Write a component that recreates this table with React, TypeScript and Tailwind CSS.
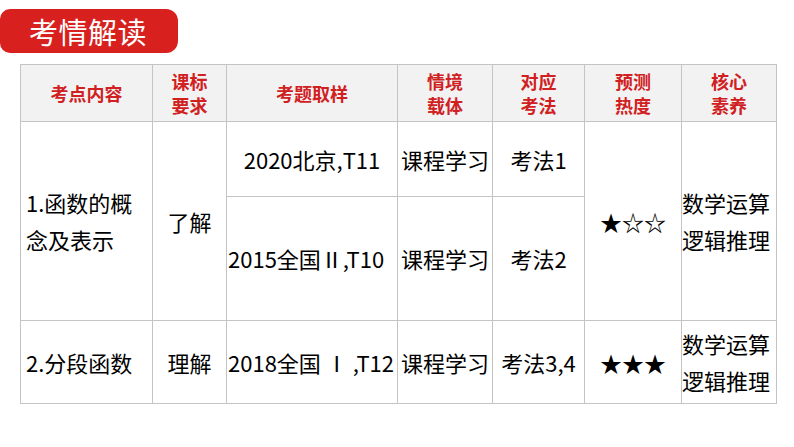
export default function App() {
  const body = "text-[22px] text-black text-center align-middle border border-[#c4c4c4] whitespace-nowrap leading-[37px]";
  const head = "text-[18px] font-bold text-[#d0201f] text-center align-middle border border-[#c4c4c4] bg-[#f2f2f2] leading-[24px]";
  return (
    <div
      className="w-[794px] h-[447px] bg-white relative overflow-hidden"
      style={{ fontFamily: '"Noto Sans CJK SC", "Noto Sans", sans-serif' }}
    >
      <div className="pt-[9px]">
        <div className="w-[178px] h-[44px] bg-[#d8211f] rounded-r-[12px] rounded-l-[10px] flex items-center pl-[29px] text-white text-[29px] leading-none tracking-[0.5px]">
          考情解读
        </div>
      </div>
      <div className="pl-[20px] pt-[11px]">
        <table className="border-collapse table-fixed w-[756px]">
          <colgroup>
            <col className="w-[132px]" />
            <col className="w-[74px]" />
            <col className="w-[171px]" />
            <col className="w-[95px]" />
            <col className="w-[92px]" />
            <col className="w-[97px]" />
            <col className="w-[95px]" />
          </colgroup>
          <tbody>
            <tr className="h-[57px]">
              <td className={head}>考点内容</td>
              <td className={head}>课标<br />要求</td>
              <td className={head}>考题取样</td>
              <td className={head}>情境<br />载体</td>
              <td className={head}>对应<br />考法</td>
              <td className={head}>预测<br />热度</td>
              <td className={head}>核心<br />素养</td>
            </tr>
            <tr className="h-[75px]">
              <td rowSpan={2} className={`${body} !text-left pl-[5px]`}>
                1.函数的概<br />念及表示
              </td>
              <td rowSpan={2} className={body}>了解</td>
              <td className={body}>2020北京,T11</td>
              <td className={body}>课程学习</td>
              <td className={body}>考法1</td>
              <td rowSpan={2} className={body}>★☆☆</td>
              <td rowSpan={2} className={`${body} !text-left`}>
                数学运算<br />逻辑推理
              </td>
            </tr>
            <tr className="h-[124px]">
              <td className={`${body} !text-left pl-[1px]`}>2015全国Ⅱ,T10</td>
              <td className={body}>课程学习</td>
              <td className={body}>考法2</td>
            </tr>
            <tr className="h-[83px]">
              <td className={`${body} !text-left pl-[5px]`}>2.分段函数</td>
              <td className={body}>理解</td>
              <td className={`${body} !text-left pl-[1px]`}>2018全国 Ⅰ ,T12</td>
              <td className={body}>课程学习</td>
              <td className={body}>考法3,4</td>
              <td className={body}>★★★</td>
              <td className={`${body} !text-left`}>
                数学运算<br />逻辑推理
              </td>
            </tr>
          </tbody>
        </table>
      </div>
    </div>
  );
}
